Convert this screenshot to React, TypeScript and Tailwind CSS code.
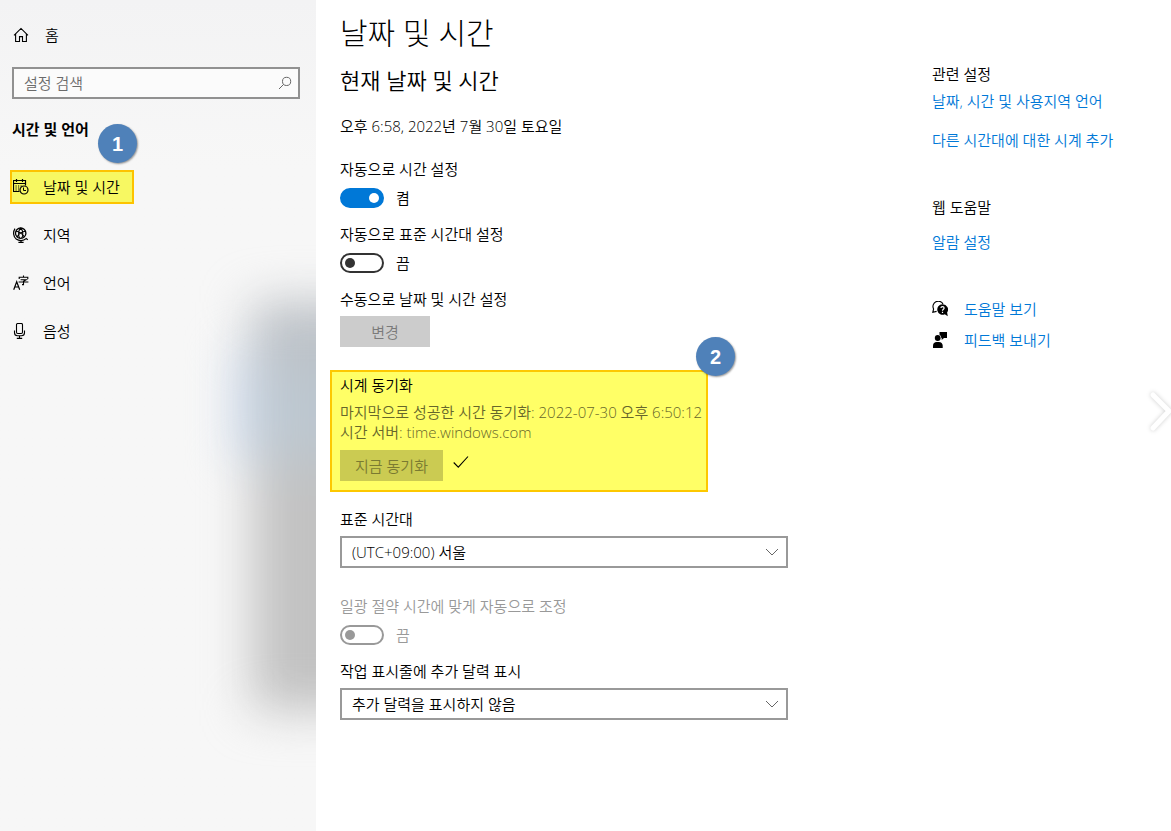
import { useState, type ReactNode } from 'react'
import clsx from 'clsx'

type IconProps = { className?: string }

function HomeIcon({ className }: IconProps) {
  return (
    <svg viewBox="0 0 16 16" className={className} fill="none" stroke="currentColor" strokeWidth="1.1">
      <path d="M1 8.3 8 1.4l7 6.9M2.6 7v7.5h3.9V9.6h3v4.9h3.9V7" />
    </svg>
  )
}

function SearchIcon({ className }: IconProps) {
  return (
    <svg viewBox="0 0 14 14" className={className} fill="none" stroke="currentColor" strokeWidth="1">
      <circle cx="8.6" cy="5.4" r="4.1" />
      <path d="M5.6 8.4 1 13" />
    </svg>
  )
}

function CalendarClockIcon({ className }: IconProps) {
  return (
    <svg viewBox="0 0 16 16" className={className} fill="none" stroke="currentColor">
      <path d="M6.5 12.5h-6v-11h12v5M.5 4.5h12M3.5 0v3M9.5 0v3" strokeWidth="1.2" />
      <path d="M2.5 7h1.2M5 7h1.2M7.5 7h1.2M2.5 9h1.2M5 9h1.2M2.5 11h1.2M5 11h1.2" strokeWidth="1.2" />
      <circle cx="11" cy="11" r="4" strokeWidth="1.2" />
      <path d="M10.5 8.5v3H13" />
    </svg>
  )
}

function GlobeIcon({ className }: IconProps) {
  return (
    <svg viewBox="0 0 16 16" className={className} fill="none" stroke="currentColor">
      <circle cx="7.7" cy="6.2" r="5.2" strokeWidth="1.3" />
      <path d="M3 4.3c3.2.2 7 2.8 8.4 5.8M12.4 4.3c-3.2.2-7.2 2.8-8.4 5.8M7.7 1C5.2 3.6 5 8.4 6.7 11.3M7.7 1c2.5 2.6 2.7 7.4 1 10.3" strokeWidth="1.1" />
      <path d="M2 1.6C-.2 5 .2 9.6 3.2 12c2.9 2.2 7.1 2.2 9.9-.4l1.7 1.1M8 13.6v1.6M5.4 15.3h5.2" strokeWidth="1.2" />
    </svg>
  )
}

function LanguageIcon({ className }: IconProps) {
  return (
    <svg viewBox="0 0 16 16" className={className} fill="none" stroke="currentColor">
      <path d="m.7 14.7 3-8 3 8M1.7 12h4" strokeWidth="1.2" />
      <path d="M6.2 4V2.3h8.6V4M10.5.6v1.7M7.6 4.7h5.6l-2.7 1.6v3.3H9M5.6 7h9.8" strokeWidth="1.1" />
    </svg>
  )
}

function MicIcon({ className }: IconProps) {
  return (
    <svg viewBox="0 0 16 16" className={className} fill="none" stroke="currentColor" strokeWidth="1.1">
      <rect x="3.5" y=".5" width="6" height="10" rx="1.2" />
      <path d="M1.5 7.5v2.3c0 1.8 1.2 3 3 3h4c1.8 0 3-1.2 3-3V7.5M6.5 12.8v2.6M3.8 15.4h5.4" />
    </svg>
  )
}

function HelpIcon({ className }: IconProps) {
  return (
    <svg viewBox="0 0 16 16" className={className} fill="none">
      <path d="M11 3A5.2 5.2 0 1 0 1.6 8L.8 11.3l3.8-.9" stroke="black" strokeWidth="1.1" />
      <path d="M10.4 3.2a5.3 5.3 0 1 0 2.4 10.1l3 1.9-.7-3.7a5.3 5.3 0 0 0-4.7-8.3Z" fill="black" />
      <path d="M8.9 7c.1-1.9 3.2-1.8 3.2 0 0 1.3-1.6 1.3-1.6 2.7M10.5 10.7v1.2" stroke="white" strokeWidth="1.2" />
    </svg>
  )
}

function FeedbackIcon({ className }: IconProps) {
  return (
    <svg viewBox="0 0 16 16" className={className} fill="currentColor">
      <path d="M7.5 0H15v6h-3l-2.3 2V6h-.4a4 4 0 0 0-1.8-3.2Z" />
      <circle cx="5.7" cy="6" r="2.9" />
      <path d="M1 16v-2.3C1 11.3 2.6 10 4.6 10h2.3c2.2 0 3.8 1.5 3.8 3.7V16Z" />
    </svg>
  )
}

function StepBadge({ className, children }: { className: string; children: ReactNode }) {
  return (
    <span
      className={clsx(
        "absolute flex size-[39px] items-center justify-center rounded-full bg-[#4f81b9] font-['Liberation_Sans',sans-serif] text-xl font-bold text-white shadow-[1px_1px_2px_rgba(0,0,0,0.4)]",
        className,
      )}
    >
      {children}
    </span>
  )
}

type ToggleProps = { id: string; label: string; initial?: boolean; disabled?: boolean }

function Toggle({ id, label, initial = false, disabled = false }: ToggleProps) {
  const [on, setOn] = useState(initial)

  return (
    <div className={disabled ? 'text-[#999]' : 'text-black'}>
      <label htmlFor={id} className="block">
        {label}
      </label>
      <div className="mt-[9px] flex h-5 items-center gap-3">
        <input
          id={id}
          type="checkbox"
          role="switch"
          checked={on}
          disabled={disabled}
          onChange={(e) => setOn(e.target.checked)}
          className="flex h-5 w-11 appearance-none items-center rounded-full border-2 border-[#333] px-[3px] before:size-[10px] before:rounded-full before:bg-[#333] checked:justify-end checked:border-[#0078d7] checked:bg-[#0078d7] checked:before:bg-white disabled:border-[#999] disabled:before:bg-[#999]"
        />
        <span>{on ? '켬' : '끔'}</span>
      </div>
    </div>
  )
}

function SelectField({ id, label, options }: { id: string; label: string; options: string[] }) {
  return (
    <div>
      <label htmlFor={id} className="block">
        {label}
      </label>
      <div className="relative mt-[7px] max-w-[448px]">
        <select
          id={id}
          className="block h-8 w-full appearance-none border-2 border-[#999] bg-white px-[10px] text-black"
        >
          {options.map((o) => (
            <option key={o}>{o}</option>
          ))}
        </select>
        <svg
          viewBox="0 0 14 8"
          className="pointer-events-none absolute top-3 right-[9px] h-2 w-[14px]"
          fill="none"
          stroke="#666"
        >
          <path d="m1 1 6 6 6-6" />
        </svg>
      </div>
    </div>
  )
}

const NAV = [
  { label: '날짜 및 시간', Icon: CalendarClockIcon, active: true },
  { label: '지역', Icon: GlobeIcon },
  { label: '언어', Icon: LanguageIcon },
  { label: '음성', Icon: MicIcon },
]

function Sidebar() {
  return (
    <aside className="relative w-[316px] shrink-0 overflow-hidden bg-linear-to-b from-[#f3f3f4] to-[#f7f7f7] to-20%">
      {/* Acrylic backdrop */}
      <div className="absolute top-[350px] -right-5 h-[110px] w-[105px] bg-[#dde6f4] blur-[22px]" />
      <div className="absolute top-[302px] -right-24 h-[408px] w-[160px] bg-linear-to-b from-[#bdc0c4] via-[#bcc8d2] via-30% to-[#c2c2c2] to-46% blur-[24px]" />

      <div className="relative pt-[11px] pr-4 pl-3">
        <a href="#home" className="flex h-12 items-center gap-4">
          <HomeIcon className="ml-px size-4" />
          홈
        </a>
        <div className="relative mt-2">
          <input
            type="search"
            aria-label="설정 검색"
            placeholder="설정 검색"
            className="block h-8 w-full border-2 border-[#919191] bg-white/60 px-[10px] placeholder:text-[#6b6b6b] placeholder:opacity-100"
          />
          <SearchIcon className="pointer-events-none absolute top-[9px] right-2 size-[14px] text-[#666]" />
        </div>
        <h2 className="mt-5 font-semibold">시간 및 언어</h2>
        <nav className="mt-6">
          <ul>
            {NAV.map(({ label, Icon, active }) => (
              <li key={label} className="flex h-12 items-center">
                <a
                  href="#nav"
                  aria-current={active ? 'page' : undefined}
                  className={clsx(
                    'relative -ml-0.5 flex h-[34px] w-[124px] items-center gap-[14px] border-2',
                    active ? 'border-[#fdc300] bg-[#f7f862]' : 'border-transparent',
                  )}
                >
                  <Icon className="ml-px size-4 shrink-0" />
                  {label}
                  {active && <StepBadge className="-top-12 -right-[5px]">1</StepBadge>}
                </a>
              </li>
            ))}
          </ul>
        </nav>
      </div>
    </aside>
  )
}

function RelatedLinks() {
  return (
    <aside className="w-[239px] shrink-0 pt-16 text-[#0078d7]">
      <h3 className="text-black">관련 설정</h3>
      <a href="#region" className="mt-[7px] block">
        날짜, 시간 및 사용지역 언어
      </a>
      <a href="#clocks" className="mt-[19px] block">
        다른 시간대에 대한 시계 추가
      </a>
      <h3 className="mt-[47px] text-black">웹 도움말</h3>
      <a href="#alarm" className="mt-[15px] block">
        알람 설정
      </a>
      <a href="#help" className="mt-[47px] flex items-center gap-4">
        <HelpIcon className="size-4" />
        도움말 보기
      </a>
      <a href="#feedback" className="mt-[11px] flex items-center gap-4">
        <FeedbackIcon className="size-4 text-black" />
        피드백 보내기
      </a>
    </aside>
  )
}

export default function App() {
  return (
    <div className="relative flex min-h-screen overflow-hidden bg-white font-['Open_Sans','Noto_Sans_CJK_KR',sans-serif] text-[15px] leading-5 font-[350] text-black">
      <Sidebar />

      <main className="min-w-0 flex-1 pt-[13px] pb-8 pl-6">
        <h1 className="text-3xl leading-10 font-light">날짜 및 시간</h1>
        <h2 className="mt-[13px] text-[22px] leading-7">현재 날짜 및 시간</h2>
        <p className="mt-[22px]">오후 6:58, 2022년 7월 30일 토요일</p>

        <div className="mt-[23px] space-y-4">
          <Toggle id="auto-time" label="자동으로 시간 설정" initial />
          <Toggle id="auto-zone" label="자동으로 표준 시간대 설정" />
          <div>
            <p id="manual-label">수동으로 날짜 및 시간 설정</p>
            <button
              type="button"
              disabled
              aria-describedby="manual-label"
              className="mt-[7px] h-[31px] w-[90px] bg-[#ccc] text-[#7a7a7a]"
            >
              변경
            </button>
          </div>
        </div>

        <section className="relative mt-[23px] -ml-[10px] w-[378px] border-2 border-[#fdc800] bg-[#ffff66] px-2 pt-[3px] pb-[9px]">
          <h3>시계 동기화</h3>
          <p className="mt-[7px] whitespace-nowrap text-[#66662b]">
            마지막으로 성공한 시간 동기화: 2022-07-30 오후 6:50:12
            <br />
            시간 서버: time.windows.com
          </p>
          <div className="mt-2 flex gap-[10px]">
            <button type="button" disabled className="h-[31px] w-[103px] bg-[#cbcb52] text-[#7a7a31]">
              지금 동기화
            </button>
            <svg viewBox="0 0 16 14" className="mt-[5px] h-[14px] w-4" fill="none" stroke="black" strokeWidth="1.1">
              <path d="m.7 7.5 4.6 4.7L15 1.5" />
            </svg>
          </div>
          <StepBadge className="-top-[35px] -right-[29px]">2</StepBadge>
        </section>

        <div className="mt-[17px]">
          <SelectField id="timezone" label="표준 시간대" options={['(UTC+09:00) 서울']} />
        </div>
        <div className="mt-7 space-y-4">
          <Toggle id="dst" label="일광 절약 시간에 맞게 자동으로 조정" disabled />
          <SelectField
            id="calendar"
            label="작업 표시줄에 추가 달력 표시"
            options={['추가 달력을 표시하지 않음']}
          />
        </div>
      </main>

      <RelatedLinks />

      <button type="button" aria-label="다음" className="absolute top-[386px] -right-1.5 h-[50px] w-8">
        <svg
          viewBox="0 0 32 50"
          className="h-full w-full drop-shadow-[0_0_2px_rgba(0,0,0,0.2)]"
          fill="none"
          stroke="white"
          strokeWidth="5"
          strokeLinecap="round"
        >
          <path d="m8 9 16 16L8 42" />
        </svg>
      </button>
    </div>
  )
}
